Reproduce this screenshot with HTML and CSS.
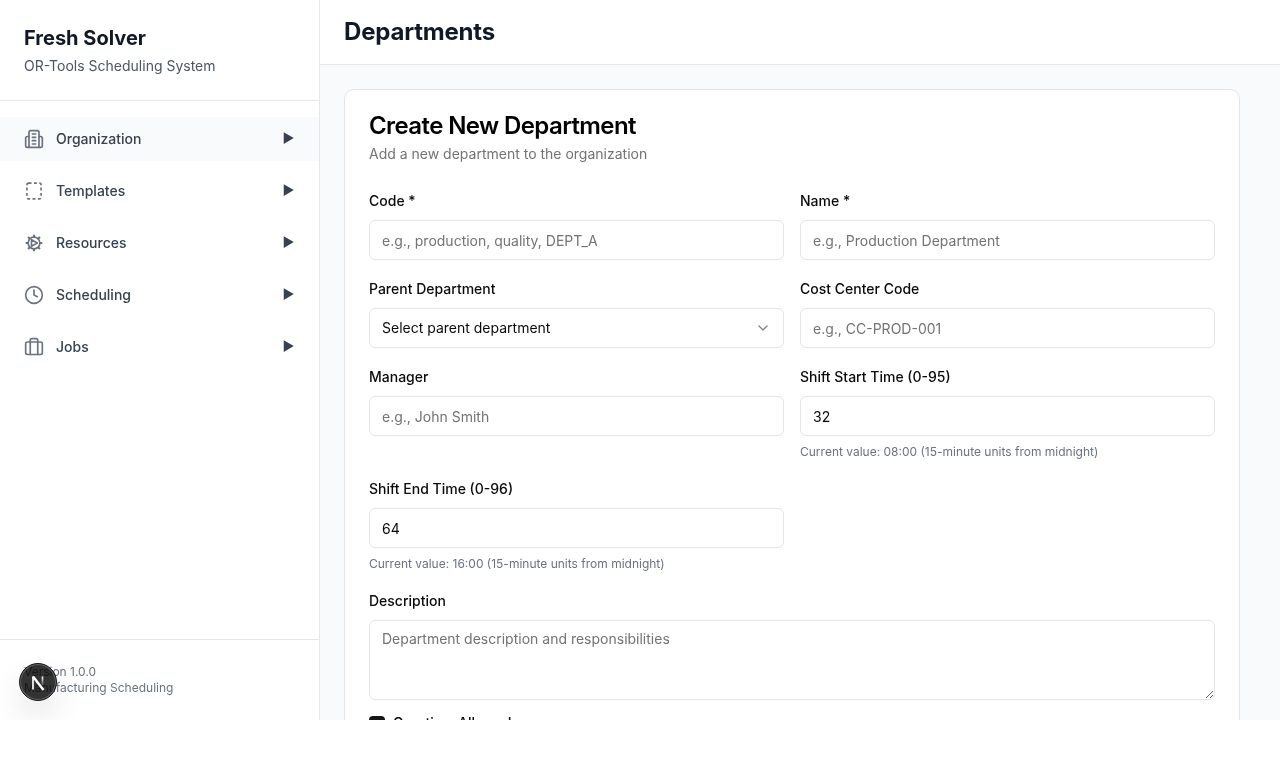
FILE: index.html
```html
<!DOCTYPE html>
<html lang="en">
<head>
<meta charset="utf-8">
<title>Departments</title>
<link rel="stylesheet" href="styles.css">
</head>
<body>
<div class="app">
  <aside class="sidebar">
    <div class="brand">
      <h1 class="brand-title">Fresh Solver</h1>
      <p class="brand-sub">OR-Tools Scheduling System</p>
    </div>
    <nav class="nav">
      <a class="nav-item is-active">
        <svg class="nav-icon" viewBox="0 0 24 24"><path d="M6 22V4a2 2 0 0 1 2-2h8a2 2 0 0 1 2 2v18"/><path d="M6 9H4a2 2 0 0 0-2 2v9a2 2 0 0 0 2 2h16a2 2 0 0 0 2-2v-9a2 2 0 0 0-2-2h-2"/><path d="M10 6h4M10 10h4M10 14h4M10 18h4"/></svg>
        <span class="nav-label">Organization</span>
        <span class="nav-arrow">▶</span>
      </a>
      <a class="nav-item">
        <svg class="nav-icon" viewBox="0 0 24 24"><rect x="3.500" y="2.500" width="17" height="19" rx="2" stroke-linecap="butt" stroke-dasharray="3.500 2.900"/></svg>
        <span class="nav-label">Templates</span>
        <span class="nav-arrow">▶</span>
      </a>
      <a class="nav-item">
        <svg class="nav-icon" viewBox="0 0 24 24"><circle cx="12" cy="12" r="7"/><path class="gear-teeth" d="M12 2v3M12 19v3M2 12h3M19 12h3M4.900 4.900l2.100 2.100M17 17l2.100 2.100M4.900 19.100 7 17M17 7l2.100-2.100"/><path d="M9 8v8l7-4z"/></svg>
        <span class="nav-label">Resources</span>
        <span class="nav-arrow">▶</span>
      </a>
      <a class="nav-item">
        <svg class="nav-icon" viewBox="0 0 24 24"><circle cx="12" cy="12" r="10"/><path d="M12 6v6l4 2"/></svg>
        <span class="nav-label">Scheduling</span>
        <span class="nav-arrow">▶</span>
      </a>
      <a class="nav-item">
        <svg class="nav-icon" viewBox="0 0 24 24"><rect x="2" y="6" width="20" height="15" rx="2"/><path d="M7.500 21V4a2 2 0 0 1 2-2h5a2 2 0 0 1 2 2v17"/></svg>
        <span class="nav-label">Jobs</span>
        <span class="nav-arrow">▶</span>
      </a>
    </nav>
    <div class="side-foot">
      <div>Version 1.0.0</div>
      <div>Manufacturing Scheduling</div>
    </div>
  </aside>
  <main class="main">
    <header class="topbar"><h2 class="page-title">Departments</h2></header>
    <div class="content">
      <section class="card">
        <div class="card-head">
          <h3 class="card-title">Create New Department</h3>
          <p class="card-sub">Add a new department to the organization</p>
        </div>
        <form class="form-grid">
          <div class="field">
            <label class="label">Code *</label>
            <input class="input" placeholder="e.g., production, quality, DEPT_A">
          </div>
          <div class="field">
            <label class="label">Name *</label>
            <input class="input" placeholder="e.g., Production Department">
          </div>
          <div class="field">
            <label class="label">Parent Department</label>
            <button type="button" class="select">
              <span>Select parent department</span>
              <svg class="chevron" viewBox="0 0 24 24"><path d="m6 9 6 6 6-6"/></svg>
            </button>
          </div>
          <div class="field">
            <label class="label">Cost Center Code</label>
            <input class="input" placeholder="e.g., CC-PROD-001">
          </div>
          <div class="field">
            <label class="label">Manager</label>
            <input class="input" placeholder="e.g., John Smith">
          </div>
          <div class="field">
            <label class="label">Shift Start Time (0-95)</label>
            <input class="input" value="32">
            <p class="help">Current value: 08:00 (15-minute units from midnight)</p>
          </div>
          <div class="field">
            <label class="label">Shift End Time (0-96)</label>
            <input class="input" value="64">
            <p class="help">Current value: 16:00 (15-minute units from midnight)</p>
          </div>
          <div class="field field-wide">
            <label class="label">Description</label>
            <textarea class="textarea" placeholder="Department description and responsibilities"></textarea>
          </div>
          <div class="check-row field-wide">
            <span class="check"></span>
            <span class="check-label">Overtime Allowed</span>
          </div>
        </form>
      </section>
    </div>
  </main>
  <button type="button" class="dev-badge" aria-label="Next.js dev tools">
    <svg class="dev-logo" viewBox="0 0 20 20"><defs><linearGradient id="stemFade" gradientUnits="userSpaceOnUse" x1="0" y1="4.500" x2="0" y2="13.500"><stop offset="0" stop-color="#fff"/><stop offset="1" stop-color="#fff" stop-opacity="0.1"/></linearGradient></defs><path class="logo-left" d="M5 17.500V4.500"/><path class="logo-diag" d="M5 4.500 15.500 18"/><path class="logo-right" stroke="url(#stemFade)" d="M14.500 4.500v9"/></svg>
  </button>
</div>
</body>
</html>
```
FILE: styles.css
```css
* { box-sizing: border-box; }
html, body { margin: 0; padding: 0; background: #fff; }
body { font-family: Inter, "Liberation Sans", sans-serif; color: #0a0a0a; height: 764px; overflow: hidden; }
h1, h2, h3, p { margin: 0; }

.app { position: relative; display: flex; width: 1280px; height: 720px; overflow: hidden; will-change: transform; }

.sidebar { flex: 0 0 320px; display: flex; flex-direction: column; background: #fff; border-right: 1px solid #e5e7eb; }
.brand { padding: 24px 24px 24px; border-bottom: 1px solid #e5e7eb; }
.brand-title { font-size: 20px; line-height: 28px; font-weight: 700; color: #111827; }
.brand-sub { margin-top: 4px; font-size: 14px; line-height: 20px; color: #4b5563; }

.nav { flex: 1; display: flex; flex-direction: column; gap: 8px; padding-top: 16px; }
.nav-item { display: flex; align-items: center; height: 44px; padding: 0 24px; color: #374151; }
.nav-item.is-active { background: #f9fafb; }
.nav-icon { width: 20px; height: 20px; margin-right: 12px; fill: none; stroke: #6b7280; stroke-width: 2; stroke-linecap: round; stroke-linejoin: round; flex: none; }
.gear-teeth { stroke-width: 2.6; stroke-linecap: butt; }
.nav-label { flex: 1; font-size: 14px; line-height: 20px; font-weight: 500; }
.nav-arrow { font-size: 13px; line-height: 20px; padding: 0 0.500px 2px; color: #374151; }

.side-foot { padding: 24px; border-top: 1px solid #e5e7eb; font-size: 12px; line-height: 16px; color: #6b7280; }

.main { flex: 1; min-width: 0; display: flex; flex-direction: column; background: #f9fafb; }
.topbar { flex: none; height: 65px; padding: 16px 24px; background: #fff; border-bottom: 1px solid #e5e7eb; }
.page-title { font-size: 24px; line-height: 32px; font-weight: 700; letter-spacing: -0.2px; color: #111827; }
.content { flex: 1; min-height: 0; overflow: hidden; padding: 24px 40px 24px 24px; }

.card { background: #fff; border: 1px solid #e5e5e5; border-radius: 10px; padding: 24px; min-height: 700px; }
.card-head { margin-bottom: 30px; }
.card-title { font-size: 24px; line-height: 24px; font-weight: 600; letter-spacing: -0.6px; color: #000; }
.card-sub { margin-top: 6px; font-size: 14px; line-height: 20px; color: #737373; }

.form-grid { display: grid; grid-template-columns: 1fr 1fr; column-gap: 16px; row-gap: 22px; }
.field { display: flex; flex-direction: column; min-width: 0; }
.field-wide { grid-column: 1 / -1; }
.label { font-size: 14px; line-height: 14px; font-weight: 500; margin-bottom: 12px; color: #0a0a0a; }
.input, .select, .textarea { width: 100%; font-family: inherit; font-size: 14px; line-height: 20px; color: #0a0a0a; background: #fff; border: 1px solid #e5e5e5; border-radius: 6px; outline: none; }
.input { height: 40px; padding: 8px 12px; }
.input::placeholder, .textarea::placeholder { color: #737373; opacity: 1; }
.select { height: 40px; padding: 8px 12px; display: flex; align-items: center; justify-content: space-between; text-align: left; }
.chevron { width: 16px; height: 16px; fill: none; stroke: #0a0a0a; stroke-opacity: .5; stroke-width: 2; stroke-linecap: round; stroke-linejoin: round; }
.textarea { display: block; height: 80px; padding: 8px 12px; resize: vertical; }
.help { margin-top: 8px; font-size: 12px; line-height: 16px; color: #6b7280; }

.check-row { display: flex; align-items: flex-start; gap: 8px; margin-top: -6px; }
.check { width: 16px; height: 16px; border-radius: 4px; background: #171717; flex: none; }
.check-label { font-size: 14px; line-height: 14px; font-weight: 500; }

.dev-badge { position: absolute; left: 19px; top: 663px; width: 38px; height: 38px; padding: 0; display: flex; align-items: center; justify-content: center; border-radius: 50%; background: rgba(0,0,0,.8); border: 1px solid #171717; box-shadow: inset 0 0 0 1px #666, 0 16px 32px rgba(0,0,0,.1); }
.dev-logo { width: 20px; height: 20px; fill: none; stroke-width: 1.7; }
.logo-left { stroke: #fff; }
.logo-diag { stroke: #fff; stroke-width: 2.4; }
```
